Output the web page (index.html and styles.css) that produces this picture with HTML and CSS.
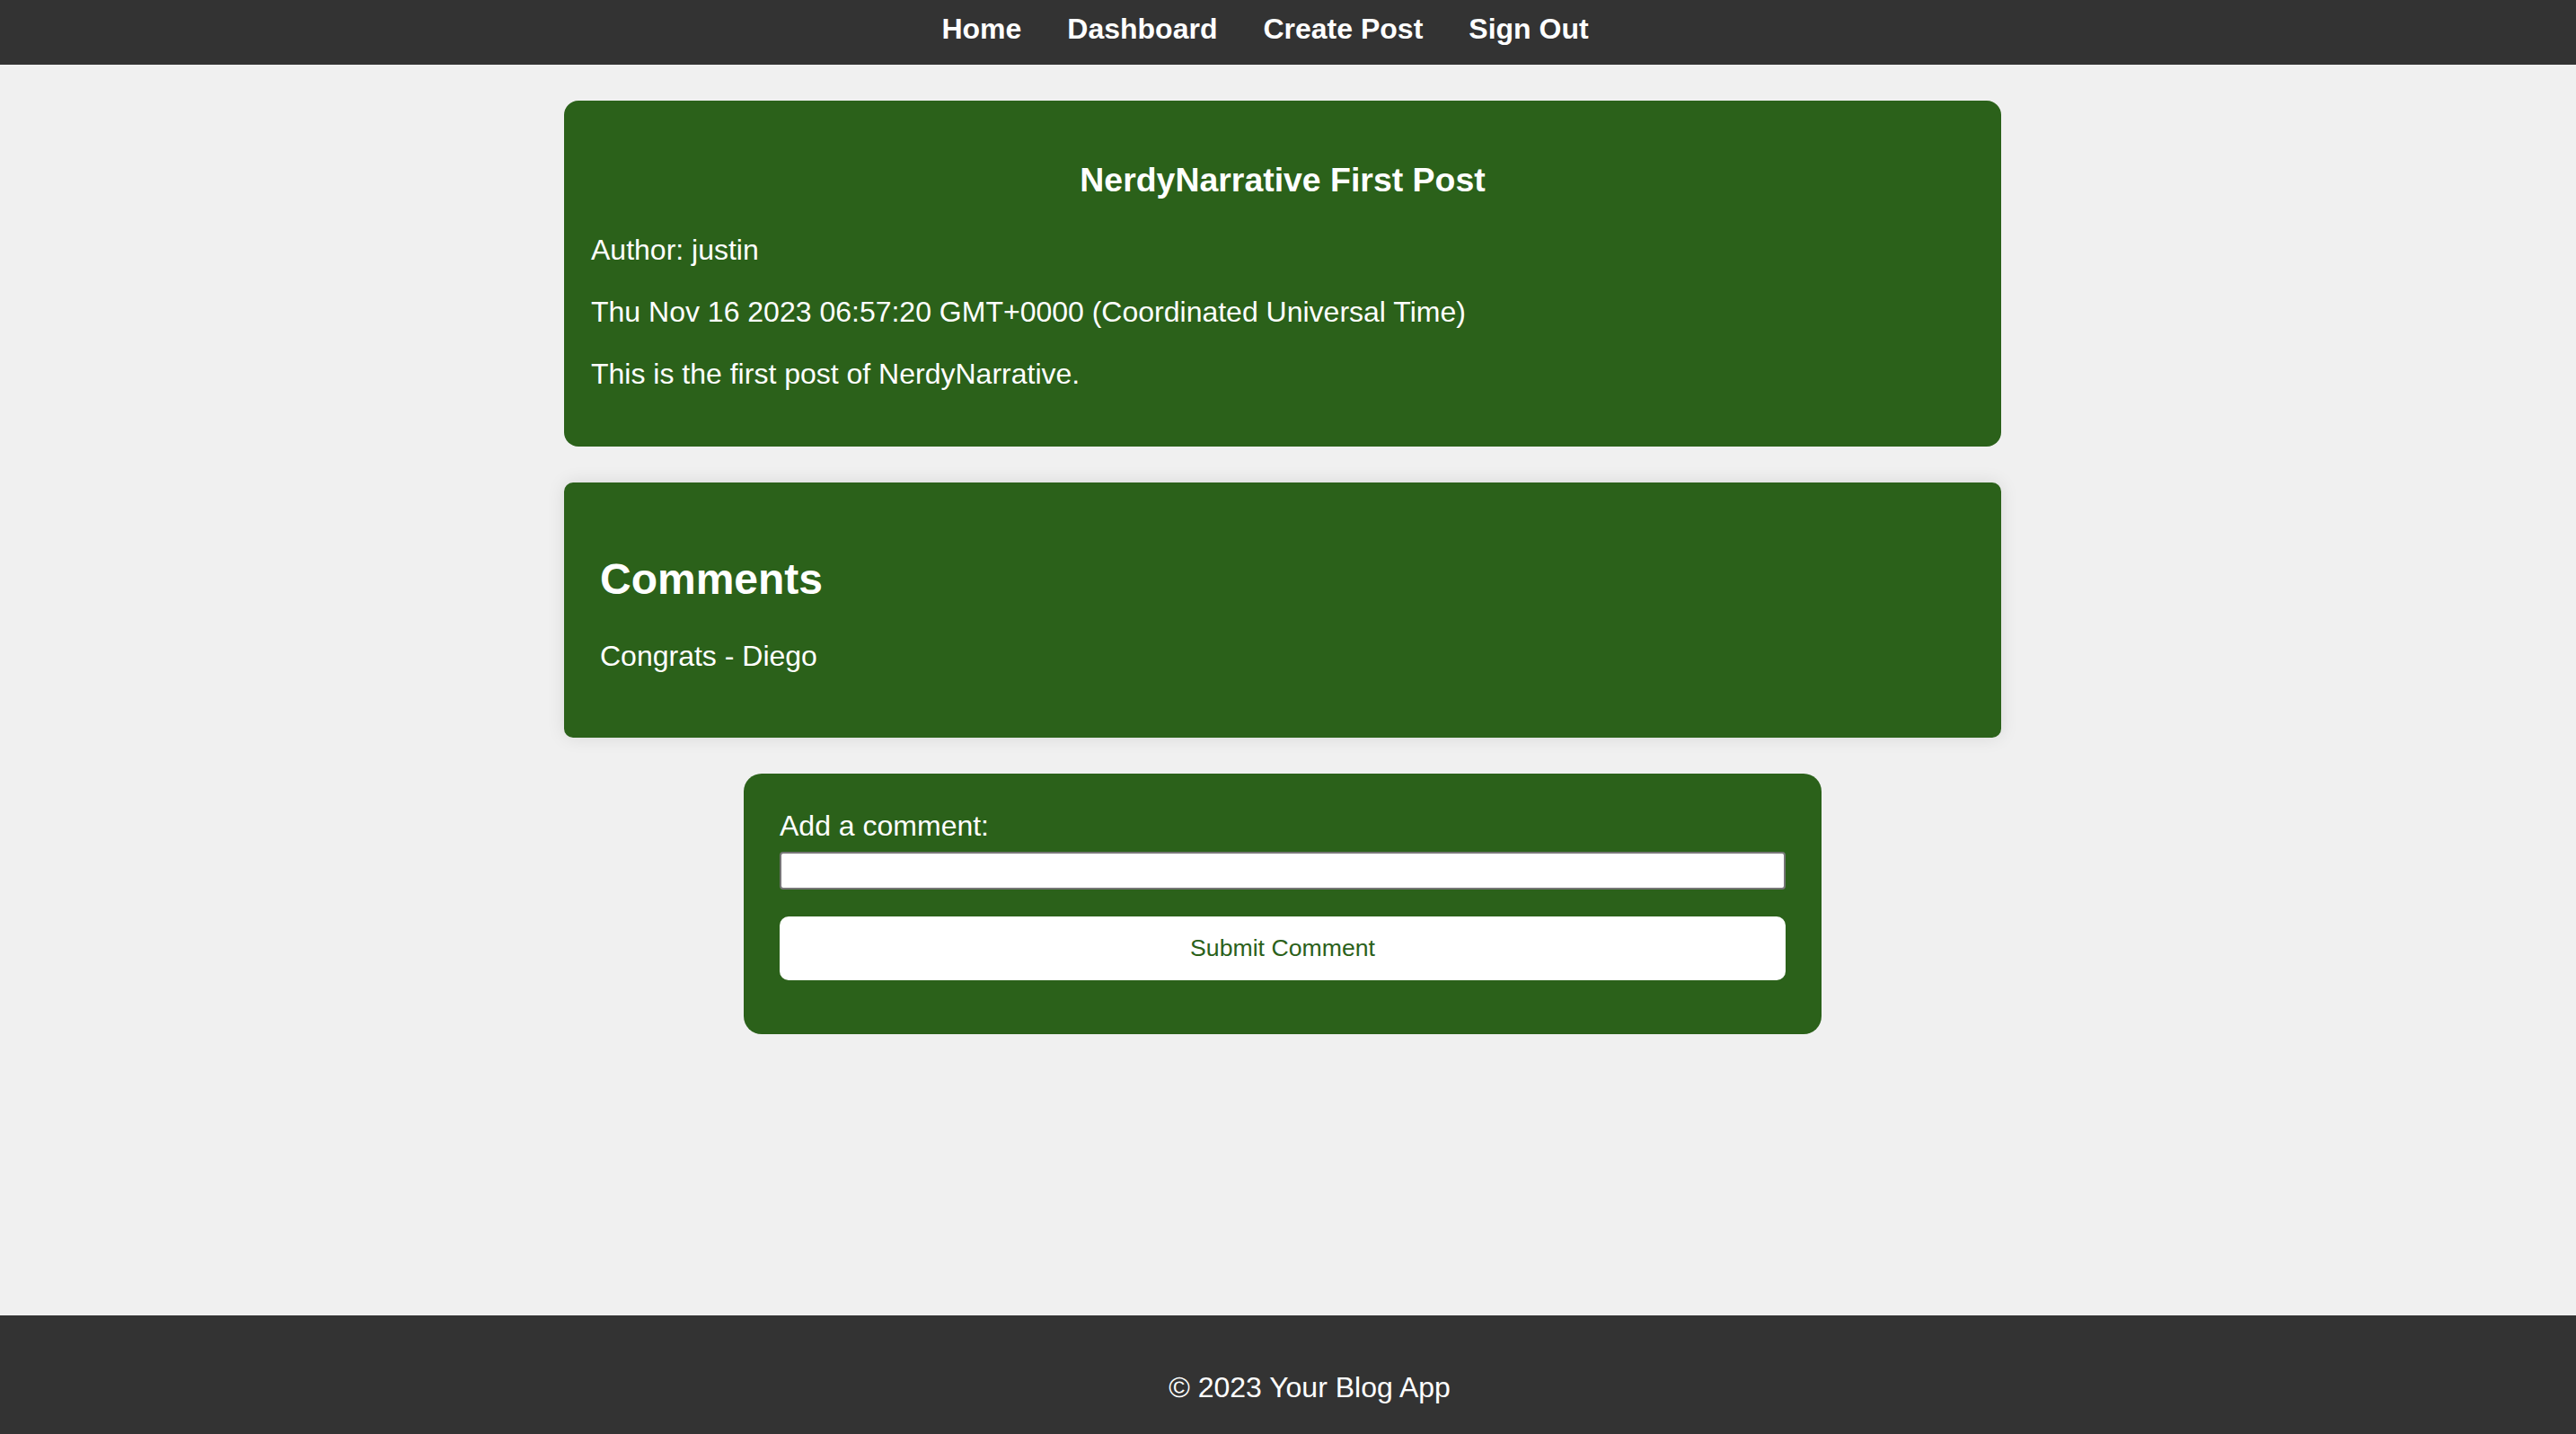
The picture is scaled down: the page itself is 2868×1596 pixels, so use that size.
FILE: index.html
```html
<!DOCTYPE html>
<html lang="en">
<head>
<meta charset="utf-8">
<title>NerdyNarrative First Post</title>
<link rel="stylesheet" href="styles.css">
</head>
<body>
  <nav class="topnav">
    <a href="#" class="nav-link">Home</a>
    <a href="#" class="nav-link">Dashboard</a>
    <a href="#" class="nav-link">Create Post</a>
    <a href="#" class="nav-link">Sign Out</a>
  </nav>

  <main class="content">
    <article class="post-card">
      <h3 class="post-title">NerdyNarrative First Post</h3>
      <p class="post-line">Author: justin</p>
      <p class="post-line">Thu Nov 16 2023 06:57:20 GMT+0000 (Coordinated Universal Time)</p>
      <p class="post-line">This is the first post of NerdyNarrative.</p>
    </article>

    <section class="comments-card">
      <h2 class="comments-title">Comments</h2>
      <p class="comment">Congrats - Diego</p>
    </section>

    <form class="comment-form">
      <label class="form-label" for="comment">Add a comment:</label>
      <input class="form-input" type="text" id="comment" name="comment">
      <button class="form-button" type="button">Submit Comment</button>
    </form>
  </main>

  <footer class="site-footer">
    <p class="footer-text">© 2023 Your Blog App</p>
  </footer>
</body>
</html>
```

FILE: styles.css
```css
html {
  height: 100%;
}

body {
  margin: 0;
  min-height: 100vh;
  display: flex;
  flex-direction: column;
  background: #f0f0f0;
  font-family: "Liberation Sans", Arial, sans-serif;
  font-size: 32px;
  color: #ffffff;
  overflow: hidden;
}

.topnav {
  flex-shrink: 0;
  height: 72px;
  box-sizing: border-box;
  padding-top: 14px;
  background: #333333;
  display: flex;
  justify-content: center;
  align-items: flex-start;
}

.nav-link {
  color: #ffffff;
  font-weight: bold;
  text-decoration: none;
  margin-right: 51px;
  line-height: normal;
}

.content {
  flex: 1;
  display: flex;
  flex-direction: column;
  align-items: center;
  gap: 40px;
  padding: 40px 12px 0 0;
}

.post-card {
  width: 1600px;
  box-sizing: border-box;
  padding: 30px;
  background: #2b611a;
  border-radius: 16px;
}

.post-title {
  font-size: 37.44px;
  font-weight: bold;
  text-align: center;
  margin: 37.44px 0;
}

.post-line {
  margin: 32px 0;
}

.comments-card {
  width: 1600px;
  box-sizing: border-box;
  padding: 40px;
  background: #2b611a;
  border-radius: 10px;
  box-shadow: 0 0 20px rgba(0, 0, 0, 0.1);
}

.comments-title {
  font-size: 48px;
  font-weight: bold;
  margin: 39.84px 0;
}

.comment {
  margin: 32px 0;
}

.comment-form {
  width: 1200px;
  box-sizing: border-box;
  padding: 40px;
  background: #2b611a;
  border-radius: 20px;
  display: flex;
  flex-direction: column;
}

.form-label {
  display: block;
  line-height: normal;
}

.form-input {
  margin-top: 10px;
  height: 42px;
  width: 100%;
  box-sizing: border-box;
  border: 2px solid #767676;
  border-radius: 4px;
  background: #ffffff;
  padding: 2px 4px;
  font-family: "Liberation Sans", Arial, sans-serif;
  font-size: 26.67px;
}

.form-button {
  margin: 30px 0 20px;
  width: 100%;
  padding: 20px;
  border: none;
  border-radius: 10px;
  background: #ffffff;
  color: #2b611a;
  font-family: "Liberation Sans", Arial, sans-serif;
  font-size: 26.67px;
  line-height: normal;
  cursor: pointer;
}

.site-footer {
  flex-shrink: 0;
  height: 132px;
  box-sizing: border-box;
  padding: 30px 0 0 48px;
  background: #333333;
  overflow: hidden;
}

.footer-text {
  margin: 32px 0;
  text-align: center;
  color: #ffffff;
}
```
